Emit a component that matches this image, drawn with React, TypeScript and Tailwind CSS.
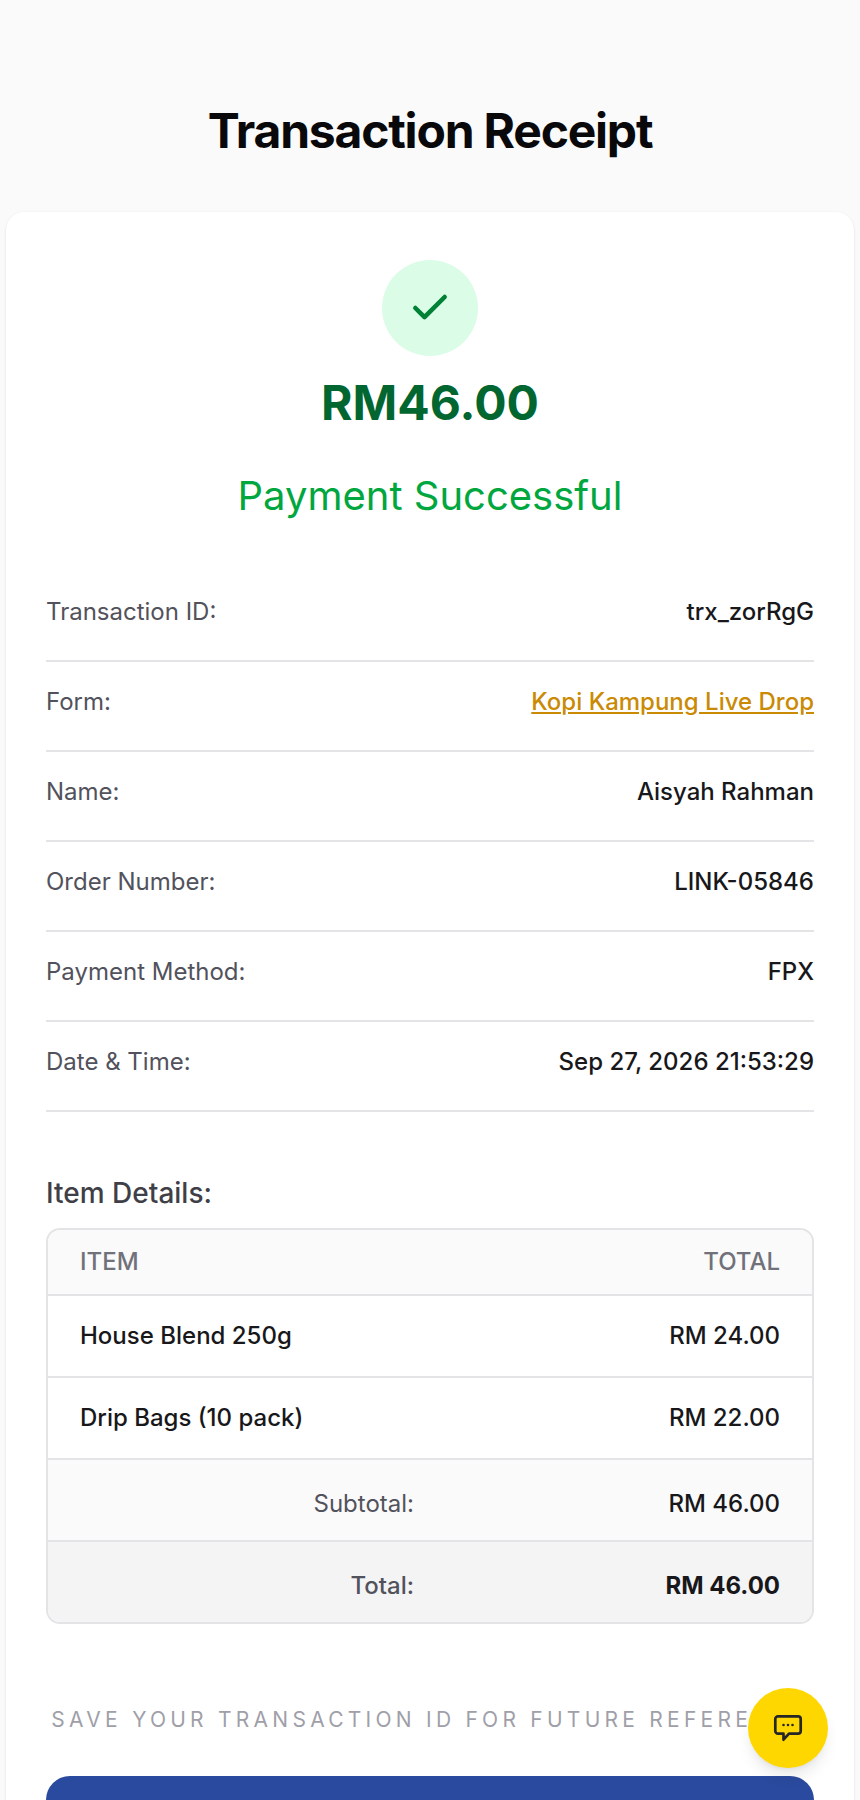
import { Check } from 'lucide-react'

const details = [
  { label: 'Transaction ID:', value: 'trx_zorRgG' },
  { label: 'Form:', value: 'Kopi Kampung Live Drop', link: true },
  { label: 'Name:', value: 'Aisyah Rahman' },
  { label: 'Order Number:', value: 'LINK-05846' },
  { label: 'Payment Method:', value: 'FPX' },
  { label: 'Date & Time:', value: 'Sep 27, 2026 21:53:29' },
]

const items = [
  { name: 'House Blend 250g', total: 'RM 24.00' },
  { name: 'Drip Bags (10 pack)', total: 'RM 22.00' },
]

function ChatIcon() {
  return (
    <svg width="32" height="32" viewBox="0 0 32 32" fill="none">
      <path
        d="M6 4.3h20a2.7 2.7 0 0 1 2.7 2.7v12a2.7 2.7 0 0 1-2.7 2.7H17l-5.5 6v-6H6A2.7 2.7 0 0 1 3.3 19V7A2.7 2.7 0 0 1 6 4.3Z"
        stroke="#262626"
        strokeWidth="2.7"
        strokeLinejoin="round"
      />
      <circle cx="11.5" cy="13" r="1.3" fill="#262626" />
      <circle cx="16" cy="13" r="1.3" fill="#262626" />
      <circle cx="20.5" cy="13" r="1.3" fill="#262626" />
    </svg>
  )
}

export default function App() {
  return (
    <div className="min-h-screen bg-zinc-50 px-1.5 pt-[95px] font-['Inter',sans-serif] text-zinc-900">
      <h1 className="mb-[45px] text-center text-[48px] leading-[72px] font-bold tracking-[-0.025em] text-zinc-950">
        Transaction Receipt
      </h1>

      <div className="rounded-[18px] bg-white px-10 pt-12 shadow-sm">
        <div className="mx-auto flex h-24 w-24 items-center justify-center rounded-full bg-green-100">
          <Check size={44} className="text-green-700" strokeWidth={2.5} />
        </div>
        <p className="mt-[11px] text-center text-[48px] leading-[72px] font-bold text-green-800">RM46.00</p>
        <p className="mt-[27px] text-center text-[40px] leading-[60px] text-green-600">Payment Successful</p>

        <div className="mt-[46px]">
          {details.map((row) => (
            <div key={row.label} className="flex h-[90px] items-center justify-between border-b-2 border-zinc-200 pb-[8px] text-[24px]">
              <span className="text-zinc-600">{row.label}</span>
              {row.link ? (
                <span className="font-medium text-[#ca8a04] underline">{row.value}</span>
              ) : (
                <span className="font-medium">{row.value}</span>
              )}
            </div>
          ))}
        </div>

        <h2 className="mt-[60px] text-[28px] leading-[42px] font-medium text-zinc-700">Item Details:</h2>

        <div className="mt-[14px] overflow-hidden rounded-[14px] border-2 border-zinc-200 text-[24px]">
          <div className="flex h-[64px] items-center justify-between bg-zinc-50 px-8 font-medium text-zinc-500">
            <span>ITEM</span>
            <span>TOTAL</span>
          </div>
          {items.map((item) => (
            <div key={item.name} className="flex h-[82px] items-center justify-between border-t-2 border-zinc-200 px-8 font-medium">
              <span>{item.name}</span>
              <span>{item.total}</span>
            </div>
          ))}
          <div className="flex h-[82px] items-center justify-between border-t-2 border-zinc-200 bg-zinc-50 px-8 pt-2">
            <span className="w-[334px] text-right text-zinc-600">Subtotal:</span>
            <span className="font-medium">RM 46.00</span>
          </div>
          <div className="flex h-[82px] items-center justify-between border-t-2 border-zinc-200 bg-zinc-100 px-8 pt-2">
            <span className="w-[334px] text-right font-medium text-zinc-600">Total:</span>
            <span className="font-bold">RM 46.00</span>
          </div>
        </div>

        <p className="mt-[80px] text-center text-[21px] leading-[32px] tracking-[4.25px] whitespace-nowrap text-zinc-400">
          SAVE YOUR TRANSACTION ID FOR FUTURE REFERENCE
        </p>

        <button className="mt-[40px] flex h-[96px] w-full items-center justify-center rounded-[24px] bg-[#2a4a9f] text-[24px] font-semibold text-white">
          Download Receipt
        </button>
      </div>

      <button className="fixed right-8 bottom-8 flex h-20 w-20 items-center justify-center rounded-full bg-[#ffd700] shadow-lg">
        <ChatIcon />
      </button>
    </div>
  )
}
